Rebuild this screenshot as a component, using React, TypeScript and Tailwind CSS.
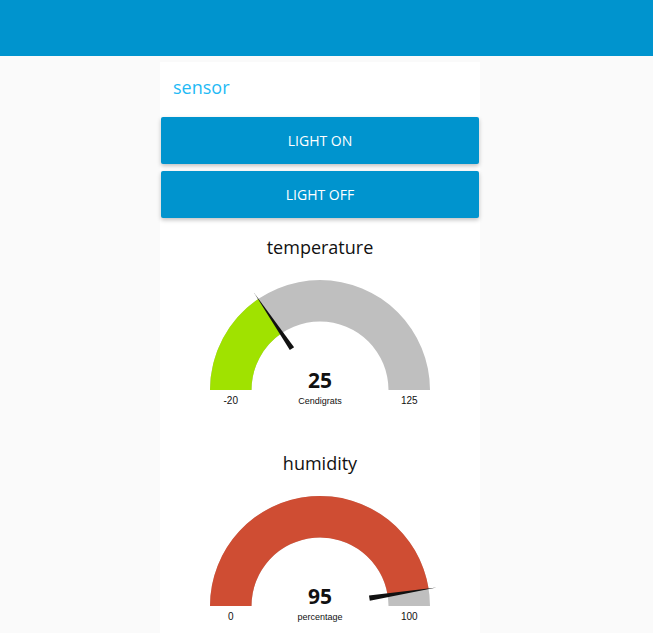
import React from 'react';

const FONT = '"Open Sans", "Noto Sans", sans-serif';

type GaugeProps = {
  title: string;
  value: number;
  min: number;
  max: number;
  units: string;
  color: string;
};

function pt(cx: number, cy: number, r: number, a: number) {
  return `${(cx + r * Math.cos(a)).toFixed(2)},${(cy - r * Math.sin(a)).toFixed(2)}`;
}

function Gauge({ title, value, min, max, units, color }: GaugeProps) {
  const cx = 160;
  const cy = 123;
  const R = 110;
  const r = 68.5;
  const f = Math.min(1, Math.max(0, (value - min) / (max - min)));
  const a = Math.PI * (1 - f);

  const bg = `M ${cx - R},${cy} A ${R} ${R} 0 0 1 ${cx + R},${cy} L ${cx + r},${cy} A ${r} ${r} 0 0 0 ${cx - r},${cy} Z`;
  const fill = `M ${cx - R},${cy} A ${R} ${R} 0 0 1 ${pt(cx, cy, R, a)} L ${pt(cx, cy, r, a)} A ${r} ${r} 0 0 0 ${cx - r},${cy} Z`;

  // needle: thin tip outside the arc, wider base inside
  const tip = pt(cx, cy, 118, a);
  const bx = cx + 50 * Math.cos(a);
  const by = cy - 50 * Math.sin(a);
  const px = 2.6 * Math.sin(a);
  const py = 2.6 * Math.cos(a);
  const needle = `M ${tip} L ${(bx + px).toFixed(2)},${(by + py).toFixed(2)} L ${(bx - px).toFixed(2)},${(by - py).toFixed(2)} Z`;

  return (
    <div className="h-[216px]">
      <div
        className="flex h-[40px] items-center justify-center text-[18px] text-[#111]"
        style={{ fontFamily: FONT }}
      >
        {title}
      </div>
      <svg width="320" height="176" viewBox="0 0 320 176" className="block">
        <path d={bg} fill="#bfbfbf" />
        <path d={fill} fill={color} />
        <path d={needle} fill="#111" />
        <text x={cx} y={cy - 2} textAnchor="middle" fontSize="21" fontWeight="700" fill="#111" fontFamily={FONT}>
          {value}
        </text>
        <text x={cx} y={cy + 14} textAnchor="middle" fontSize="9" fill="#111" fontFamily='"Liberation Sans", Arial, sans-serif'>
          {units}
        </text>
        <text x={cx - (R + r) / 2} y={cy + 14} textAnchor="middle" fontSize="10" fill="#111" fontFamily='"Liberation Sans", Arial, sans-serif'>
          {min}
        </text>
        <text x={cx + (R + r) / 2} y={cy + 14} textAnchor="middle" fontSize="10" fill="#111" fontFamily='"Liberation Sans", Arial, sans-serif'>
          {max}
        </text>
      </svg>
    </div>
  );
}

export default function App() {
  return (
    <div className="h-[633px] overflow-hidden bg-[#fafafa]" style={{ fontFamily: FONT }}>
      {/* Toolbar */}
      <header className="h-[56px] bg-[#0094ce]" />

      <main className="pt-[6px]">
        <div className="ml-[160px] w-[320px] bg-white">
          <div className="h-[55px] pl-[13px] pt-[13px] text-[18px] leading-[24px] text-[#1fbaf5]">sensor</div>

          <div className="flex flex-col gap-[7px] px-px">
            <button
              type="button"
              className="h-[47px] rounded-[2px] bg-[#0094ce] text-[14px] text-white shadow-[0_2px_4px_rgba(0,0,0,0.25)]"
            >
              LIGHT ON
            </button>
            <button
              type="button"
              className="h-[47px] rounded-[2px] bg-[#0094ce] text-[14px] text-white shadow-[0_2px_4px_rgba(0,0,0,0.25)]"
            >
              LIGHT OFF
            </button>
          </div>

          <div className="pt-[9px]">
            <Gauge title="temperature" value={25} min={-20} max={125} units="Cendigrats" color="#a0e200" />
            <Gauge title="humidity" value={95} min={0} max={100} units="percentage" color="#cf4d33" />
          </div>
        </div>
      </main>
    </div>
  );
}
